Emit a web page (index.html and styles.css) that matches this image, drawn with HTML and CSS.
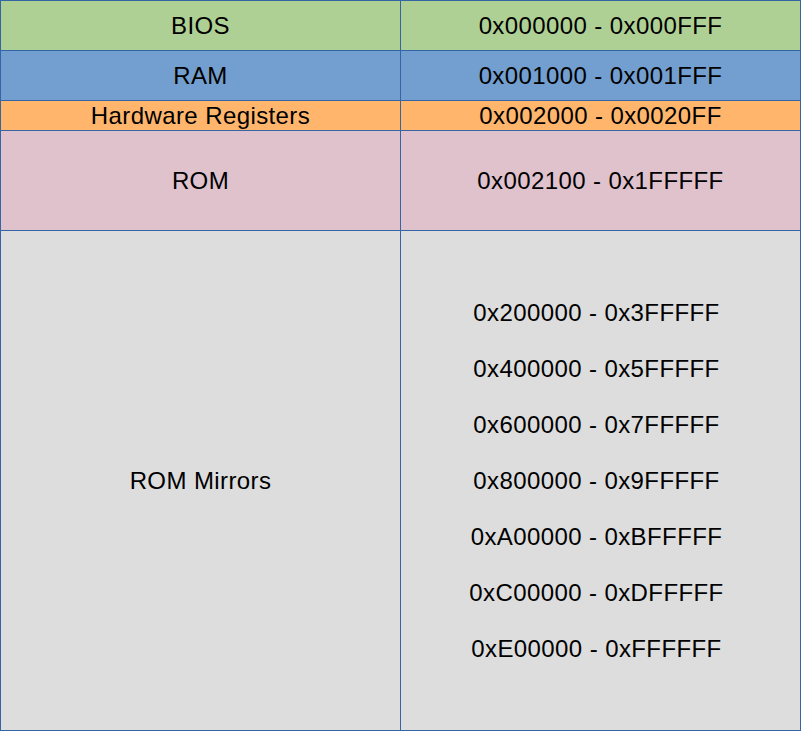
FILE: index.html
```html
<!DOCTYPE html>
<html>
<head>
<meta charset="utf-8">
<link rel="stylesheet" href="styles.css">
</head>
<body>
<div class="map">
  <div class="cell bios">BIOS</div>
  <div class="cell bios">0x000000 - 0x000FFF</div>
  <div class="cell ram">RAM</div>
  <div class="cell ram">0x001000 - 0x001FFF</div>
  <div class="cell hw">Hardware Registers</div>
  <div class="cell hw">0x002000 - 0x0020FF</div>
  <div class="cell rom">ROM</div>
  <div class="cell rom">0x002100 - 0x1FFFFF</div>
  <div class="cell mirror">ROM Mirrors</div>
  <div class="cell mirror">
    <div class="ranges">
      <div>0x200000 - 0x3FFFFF</div>
      <div>0x400000 - 0x5FFFFF</div>
      <div>0x600000 - 0x7FFFFF</div>
      <div>0x800000 - 0x9FFFFF</div>
      <div>0xA00000 - 0xBFFFFF</div>
      <div>0xC00000 - 0xDFFFFF</div>
      <div>0xE00000 - 0xFFFFFF</div>
    </div>
  </div>
</div>
</body>
</html>
```

FILE: styles.css
```css
html, body {
  margin: 0;
  padding: 0;
  background: #ffffff;
}

.map {
  display: grid;
  grid-template-columns: 399px 399px;
  grid-template-rows: 49px 49px 29px 99px 499px;
  gap: 1px;
  padding: 1px;
  width: 799px;
  background: #3465a4;
  font-family: "Liberation Sans", Arial, sans-serif;
  font-size: 24px;
  letter-spacing: 0.4px;
  color: #000000;
}

.cell {
  display: flex;
  align-items: center;
  justify-content: center;
  text-align: center;
  white-space: nowrap;
}

.bios { background: #afd095; }
.ram { background: #729fcf; }
.hw { background: #ffb66c; }
.rom { background: #e0c2cd; }
.mirror { background: #dddddd; }

.ranges {
  display: flex;
  flex-direction: column;
  align-items: center;
  line-height: 56px;
  padding-right: 8px;
}
```
